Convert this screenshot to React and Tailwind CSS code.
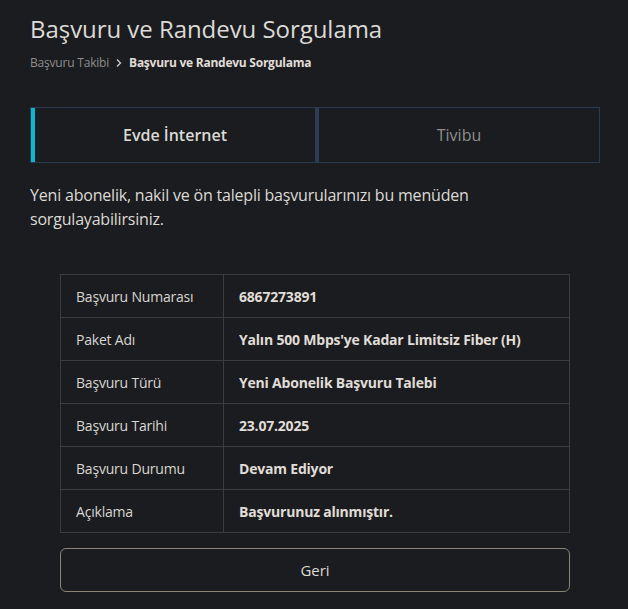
import React from "react";

const rows = [
  ["Başvuru Numarası", "6867273891"],
  ["Paket Adı", "Yalın 500 Mbps'ye Kadar Limitsiz Fiber (H)"],
  ["Başvuru Türü", "Yeni Abonelik Başvuru Talebi"],
  ["Başvuru Tarihi", "23.07.2025"],
  ["Başvuru Durumu", "Devam Ediyor"],
  ["Açıklama", "Başvurunuz alınmıştır."],
];

export default function App() {
  return (
    <div
      className="min-h-[609px] bg-[#1b1c1f] text-[#dcdad6] pl-[30px] pr-[28px] pt-[13px]"
      style={{ fontFamily: "'Open Sans', 'Noto Sans', sans-serif" }}
    >
      <h1 className="text-[24px] leading-[32px] text-[#dcdad6] tracking-[-0.05px]">Başvuru ve Randevu Sorgulama</h1>
      <div className="mt-[10px] flex items-center text-[12px] leading-[16px]">
        <span className="text-[#8e8e8e] tracking-[-0.2px]">Başvuru Takibi</span>
        <svg width="14" height="14" viewBox="0 0 14 14" className="mx-[3px]">
          <path d="M5 3.5 L8.5 7 L5 10.5" fill="none" stroke="#cfcfcf" strokeWidth="1.3" />
        </svg>
        <span className="font-bold text-[#e0ddd8] tracking-[-0.25px]">Başvuru ve Randevu Sorgulama</span>
      </div>

      <div className="mt-[36px] flex h-[56px] border border-[#2a3a50]">
        <div className="flex-1 flex items-center justify-center border-l-4 border-l-[#0fb4cf] text-[16px] font-semibold text-[#dcdad6]">
          Evde İnternet
        </div>
        <div className="flex-1 flex items-center justify-center border-l-4 border-l-[#2c3d54] text-[16px] text-[#8e8e8e]">
          Tivibu
        </div>
      </div>

      <p className="mt-[20px] text-[16px] leading-[24px] text-[#dcdad6] pr-[100px] tracking-[-0.2px]">
        Yeni abonelik, nakil ve ön talepli başvurularınızı bu menüden sorgulayabilirsiniz.
      </p>

      <div className="mt-[43px] mx-[30px]">
        <table className="w-full border-collapse border border-[#2a3a50] text-[14px] tracking-[-0.2px]">
          <tbody>
            {rows.map(([k, v]) => (
              <tr key={k} className="h-[43px]">
                <td className="w-[163px] border border-[#3a3c40] pl-[15px] text-[#d8d6d2]">{k}</td>
                <td className="border border-[#3a3c40] pl-[15px] font-bold text-[#e0ddd8]">{v}</td>
              </tr>
            ))}
          </tbody>
        </table>
        <button className="mt-[15px] w-full h-[44px] rounded-[6px] border border-[#8a8478] text-[15px] font-medium text-[#dcdad6]">
          Geri
        </button>
      </div>
    </div>
  );
}
